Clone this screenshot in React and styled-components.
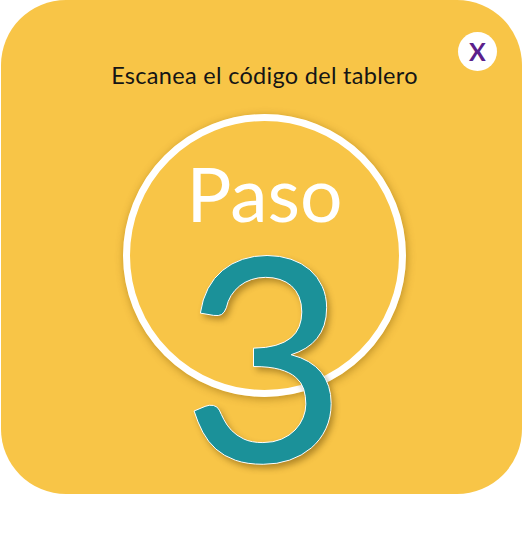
import styled, { createGlobalStyle } from 'styled-components';

const Global = createGlobalStyle`
  body {
    margin: 0;
    background: #ffffff;
    font-family: 'Lato', 'Noto Sans', sans-serif;
  }
`

function App(){
    return(
        <>
        <Global/>
        <Tarjeta>
            <Cerrar aria-label="Cerrar">X</Cerrar>
            <Titulo>Escanea el código del tablero</Titulo>
            <Circulo>
                <Paso>Paso</Paso>
                <Numero>3</Numero>
            </Circulo>
        </Tarjeta>
        </>
    )
}

const Tarjeta = styled.div`
    position: relative;
    margin-left: 1px;
    width: 521px;
    height: 494px;
    box-sizing: border-box;
    padding: 64px 0 0 6px;
    background: #F8C547;
    border-radius: 65px;
    display: flex;
    flex-direction: column;
    align-items: center;
`

const Cerrar = styled.button`
    position: absolute;
    top: 32px;
    right: 25px;
    width: 39px;
    height: 39px;
    padding: 0;
    border: none;
    border-radius: 50%;
    background: #ffffff;
    color: #5B1F8B;
    font-family: 'Lato', sans-serif;
    font-weight: 700;
    font-size: 25px;
    line-height: 39px;
    text-align: center;
    cursor: pointer;
`

const Titulo = styled.div`
    font-family: 'Lato', 'Noto Sans', sans-serif;
    font-weight: 400;
    font-size: 23.5px;
    letter-spacing: 0.3px;
    line-height: 1;
    color: #151515;
    margin-bottom: 26px;
`

const Circulo = styled.div`
    width: 283px;
    height: 283px;
    box-sizing: border-box;
    border: 7px solid #ffffff;
    border-radius: 50%;
    box-shadow: 1px 2px 8px rgba(120, 80, 0, 0.45);
    display: flex;
    flex-direction: column;
    align-items: center;
    padding-top: 42px;
`

const Paso = styled.div`
    font-family: 'Lato', sans-serif;
    font-weight: 400;
    font-size: 75px;
    line-height: 0.8;
    color: #ffffff;
`

const Numero = styled.div`
    margin-top: 27px;
    font-family: 'Lato', sans-serif;
    font-weight: 400;
    font-size: 285px;
    line-height: 0.72;
    color: #1B9199;
    -webkit-text-stroke: 1px #ffffff;
    text-shadow: 3px 4px 6px rgba(90, 60, 0, 0.45);
`

export default App
